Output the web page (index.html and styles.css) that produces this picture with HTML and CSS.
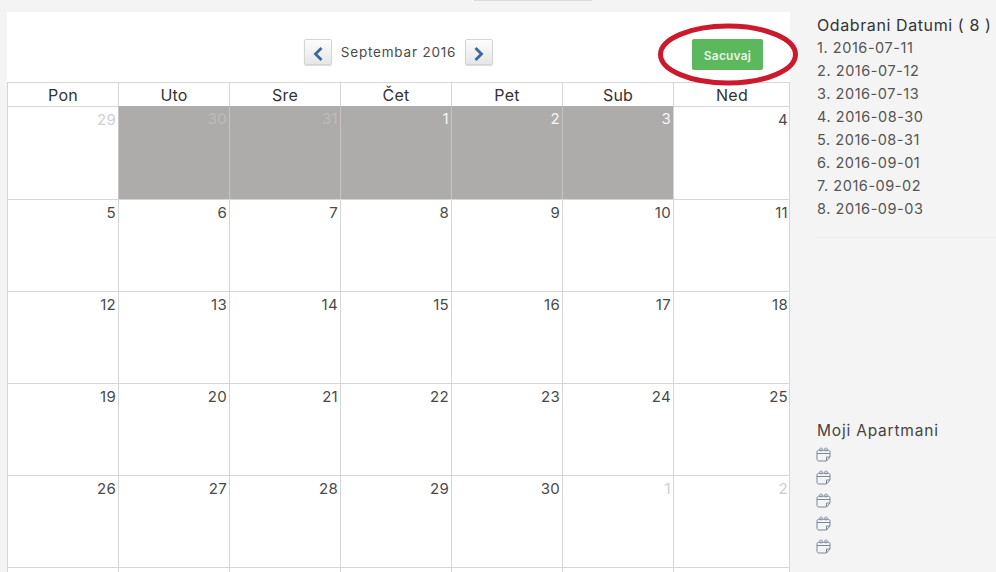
FILE: index.html
```html
<!DOCTYPE html>
<html lang="en">
<head>
    <meta charset="UTF-8">
    <meta name="viewport" content="width=device-width, initial-scale=1.0">
    <title>Kalendar</title>
    <link rel="stylesheet" href="styles.css">
</head>
<body>
    <div class="top-tab"></div>
    <div class="page">
        <div class="calendar">
            <div class="toolbar">
                <div class="month-nav">
                    <button class="nav-button">
                        <svg class="chevron" width="12" height="14" viewBox="0 0 12 14"><path d="M9.5 1 3.5 7l6 6" fill="none" stroke="#38699c" stroke-width="2.8"/></svg>
                    </button>
                    <span class="month-title">Septembar 2016</span>
                    <button class="nav-button">
                        <svg class="chevron" width="12" height="14" viewBox="0 0 12 14"><path d="M2.5 1l6 6-6 6" fill="none" stroke="#38699c" stroke-width="2.8"/></svg>
                    </button>
                </div>
                <button class="save-button">Sacuvaj</button>
                <svg class="save-circle" width="142" height="68" viewBox="0 0 142 68"><ellipse cx="71" cy="33.5" rx="67.5" ry="28.5" fill="none" stroke="#cc1a2c" stroke-width="5"/></svg>
            </div>
            <div class="grid">
                <div class="head">Pon</div>
                <div class="head">Uto</div>
                <div class="head">Sre</div>
                <div class="head">Čet</div>
                <div class="head">Pet</div>
                <div class="head">Sub</div>
                <div class="head">Ned</div>

                <div class="day other">29</div>
                <div class="day other picked">30</div>
                <div class="day other picked">31</div>
                <div class="day picked">1</div>
                <div class="day picked">2</div>
                <div class="day picked">3</div>
                <div class="day">4</div>

                <div class="day">5</div>
                <div class="day">6</div>
                <div class="day">7</div>
                <div class="day">8</div>
                <div class="day">9</div>
                <div class="day">10</div>
                <div class="day">11</div>

                <div class="day">12</div>
                <div class="day">13</div>
                <div class="day">14</div>
                <div class="day">15</div>
                <div class="day">16</div>
                <div class="day">17</div>
                <div class="day">18</div>

                <div class="day">19</div>
                <div class="day">20</div>
                <div class="day">21</div>
                <div class="day">22</div>
                <div class="day">23</div>
                <div class="day">24</div>
                <div class="day">25</div>

                <div class="day">26</div>
                <div class="day">27</div>
                <div class="day">28</div>
                <div class="day">29</div>
                <div class="day">30</div>
                <div class="day other">1</div>
                <div class="day other">2</div>

                <div class="day"></div>
                <div class="day"></div>
                <div class="day"></div>
                <div class="day"></div>
                <div class="day"></div>
                <div class="day"></div>
                <div class="day"></div>
            </div>
        </div>
        <div class="sidebar">
            <h3 class="picked-title">Odabrani Datumi ( 8 )</h3>
            <ul class="picked-list">
                <li>1. 2016-07-11</li>
                <li>2. 2016-07-12</li>
                <li>3. 2016-07-13</li>
                <li>4. 2016-08-30</li>
                <li>5. 2016-08-31</li>
                <li>6. 2016-09-01</li>
                <li>7. 2016-09-02</li>
                <li>8. 2016-09-03</li>
            </ul>
            <hr class="divider">
            <h3 class="apartments-title">Moji Apartmani</h3>
            <ul class="apartments">
                <li><svg width="15" height="15" viewBox="0 0 15 15"><path d="M1 5C1 3.8 1.8 3.2 3 3.2h9c1.2 0 2 .6 2 1.8v5l-3.5 4H3c-1.2 0-2-.6-2-1.5zM1 6.5h13M14 10h-3.5v4" fill="none" stroke="#7d879c"/><circle cx="5" cy="2.5" r="1.5" fill="none" stroke="#7d879c" stroke-width=".8"/><circle cx="10" cy="2.5" r="1.5" fill="none" stroke="#7d879c" stroke-width=".8"/></svg></li>
                <li><svg width="15" height="15" viewBox="0 0 15 15"><path d="M1 5C1 3.8 1.8 3.2 3 3.2h9c1.2 0 2 .6 2 1.8v5l-3.5 4H3c-1.2 0-2-.6-2-1.5zM1 6.5h13M14 10h-3.5v4" fill="none" stroke="#7d879c"/><circle cx="5" cy="2.5" r="1.5" fill="none" stroke="#7d879c" stroke-width=".8"/><circle cx="10" cy="2.5" r="1.5" fill="none" stroke="#7d879c" stroke-width=".8"/></svg></li>
                <li><svg width="15" height="15" viewBox="0 0 15 15"><path d="M1 5C1 3.8 1.8 3.2 3 3.2h9c1.2 0 2 .6 2 1.8v5l-3.5 4H3c-1.2 0-2-.6-2-1.5zM1 6.5h13M14 10h-3.5v4" fill="none" stroke="#7d879c"/><circle cx="5" cy="2.5" r="1.5" fill="none" stroke="#7d879c" stroke-width=".8"/><circle cx="10" cy="2.5" r="1.5" fill="none" stroke="#7d879c" stroke-width=".8"/></svg></li>
                <li><svg width="15" height="15" viewBox="0 0 15 15"><path d="M1 5C1 3.8 1.8 3.2 3 3.2h9c1.2 0 2 .6 2 1.8v5l-3.5 4H3c-1.2 0-2-.6-2-1.5zM1 6.5h13M14 10h-3.5v4" fill="none" stroke="#7d879c"/><circle cx="5" cy="2.5" r="1.5" fill="none" stroke="#7d879c" stroke-width=".8"/><circle cx="10" cy="2.5" r="1.5" fill="none" stroke="#7d879c" stroke-width=".8"/></svg></li>
                <li><svg width="15" height="15" viewBox="0 0 15 15"><path d="M1 5C1 3.8 1.8 3.2 3 3.2h9c1.2 0 2 .6 2 1.8v5l-3.5 4H3c-1.2 0-2-.6-2-1.5zM1 6.5h13M14 10h-3.5v4" fill="none" stroke="#7d879c"/><circle cx="5" cy="2.5" r="1.5" fill="none" stroke="#7d879c" stroke-width=".8"/><circle cx="10" cy="2.5" r="1.5" fill="none" stroke="#7d879c" stroke-width=".8"/></svg></li>
            </ul>
        </div>
    </div>
</body>
</html>
```

FILE: styles.css
```css
html, body {
    height: 572px;
    overflow: hidden;
}
body {
    font-family: Inter, "Open Sans", sans-serif;
    margin: 0;
    background-color: #f4f4f4;
    color: #3c3c3c;
    position: relative;
}
.top-tab {
    position: absolute;
    top: 0;
    left: 474px;
    width: 118px;
    height: 1px;
    background-color: #dcdcdc;
}
.page {
    display: flex;
    padding: 12px 0 0 7px;
}
.calendar {
    width: 783px;
    flex-shrink: 0;
    background-color: #fff;
}
.toolbar {
    position: relative;
    height: 70px;
    display: flex;
    justify-content: center;
}
.month-nav {
    display: flex;
    align-items: flex-start;
    gap: 9px;
    padding-top: 27px;
}
.nav-button {
    width: 28px;
    height: 26px;
    padding: 0;
    display: flex;
    justify-content: center;
    align-items: center;
    background: linear-gradient(#fdfdfd, #e6e6e6);
    border: 1px solid #d4d4d4;
    border-radius: 2px;
    box-shadow: 0 1px 1px rgba(0,0,0,0.15);
}
.chevron {
    margin-top: 3px;
}
.month-title {
    font-size: 13.5px;
    line-height: 26px;
    color: #4a4a4a;
    letter-spacing: 0.8px;
}
.save-button {
    position: absolute;
    top: 27px;
    left: 685px;
    width: 71px;
    height: 31px;
    padding: 2px 0 0;
    background-color: #5cb85c;
    border: none;
    border-radius: 2px;
    color: #e4f4e4;
    font-family: inherit;
    font-size: 12px;
    font-weight: 600;
    letter-spacing: 0.2px;
}
.save-circle {
    position: absolute;
    top: 9px;
    left: 650px;
}
.grid {
    display: grid;
    grid-template-columns: repeat(6, 111px) 117px;
    grid-template-rows: 24px 93px repeat(4, 92px) 10px;
    border-right: 1px solid #d6d6d6;
}
.head {
    border-top: 1px solid #d6d6d6;
    border-left: 1px solid #d6d6d6;
    text-align: center;
    font-size: 16px;
    line-height: 25px;
    color: #333;
    letter-spacing: 0.2px;
}
.day {
    border-top: 1px solid #d6d6d6;
    border-left: 1px solid #d6d6d6;
    text-align: right;
    padding: 4px 2px 0 0;
    font-size: 15px;
    line-height: 18px;
    color: #4a4a4a;
    letter-spacing: 0.3px;
}
.day.other {
    color: #cfcfcf;
}
.day.picked {
    padding-top: 3px;
    background-color: #aeabab;
    color: #f7f7f7;
    border-left-color: #c6c4c4;
    border-top-color: #aeabab;
}
.day.other.picked {
    color: #bdbbbb;
}
.sidebar {
    flex-grow: 1;
    padding: 4px 0 0 27px;
}
.picked-title {
    margin: 0;
    font-size: 16px;
    font-weight: 400;
    line-height: 19px;
    color: #333;
    white-space: nowrap;
    letter-spacing: 0.6px;
}
.picked-list {
    list-style-type: none;
    margin: 1px 0 0;
    padding: 0;
    font-size: 14.5px;
    line-height: 23px;
    color: #555;
    letter-spacing: 0.55px;
}
.divider {
    border: none;
    border-top: 1px solid #ececec;
    margin: 17px 0 0 -2px;
}
.apartments-title {
    margin: 183px 0 0;
    font-size: 15.5px;
    font-weight: 400;
    line-height: 19px;
    color: #444;
    letter-spacing: 0.8px;
}
.apartments {
    list-style-type: none;
    margin: 6px 0 0 -1px;
    padding: 0;
}
.apartments li {
    height: 23px;
}
```
